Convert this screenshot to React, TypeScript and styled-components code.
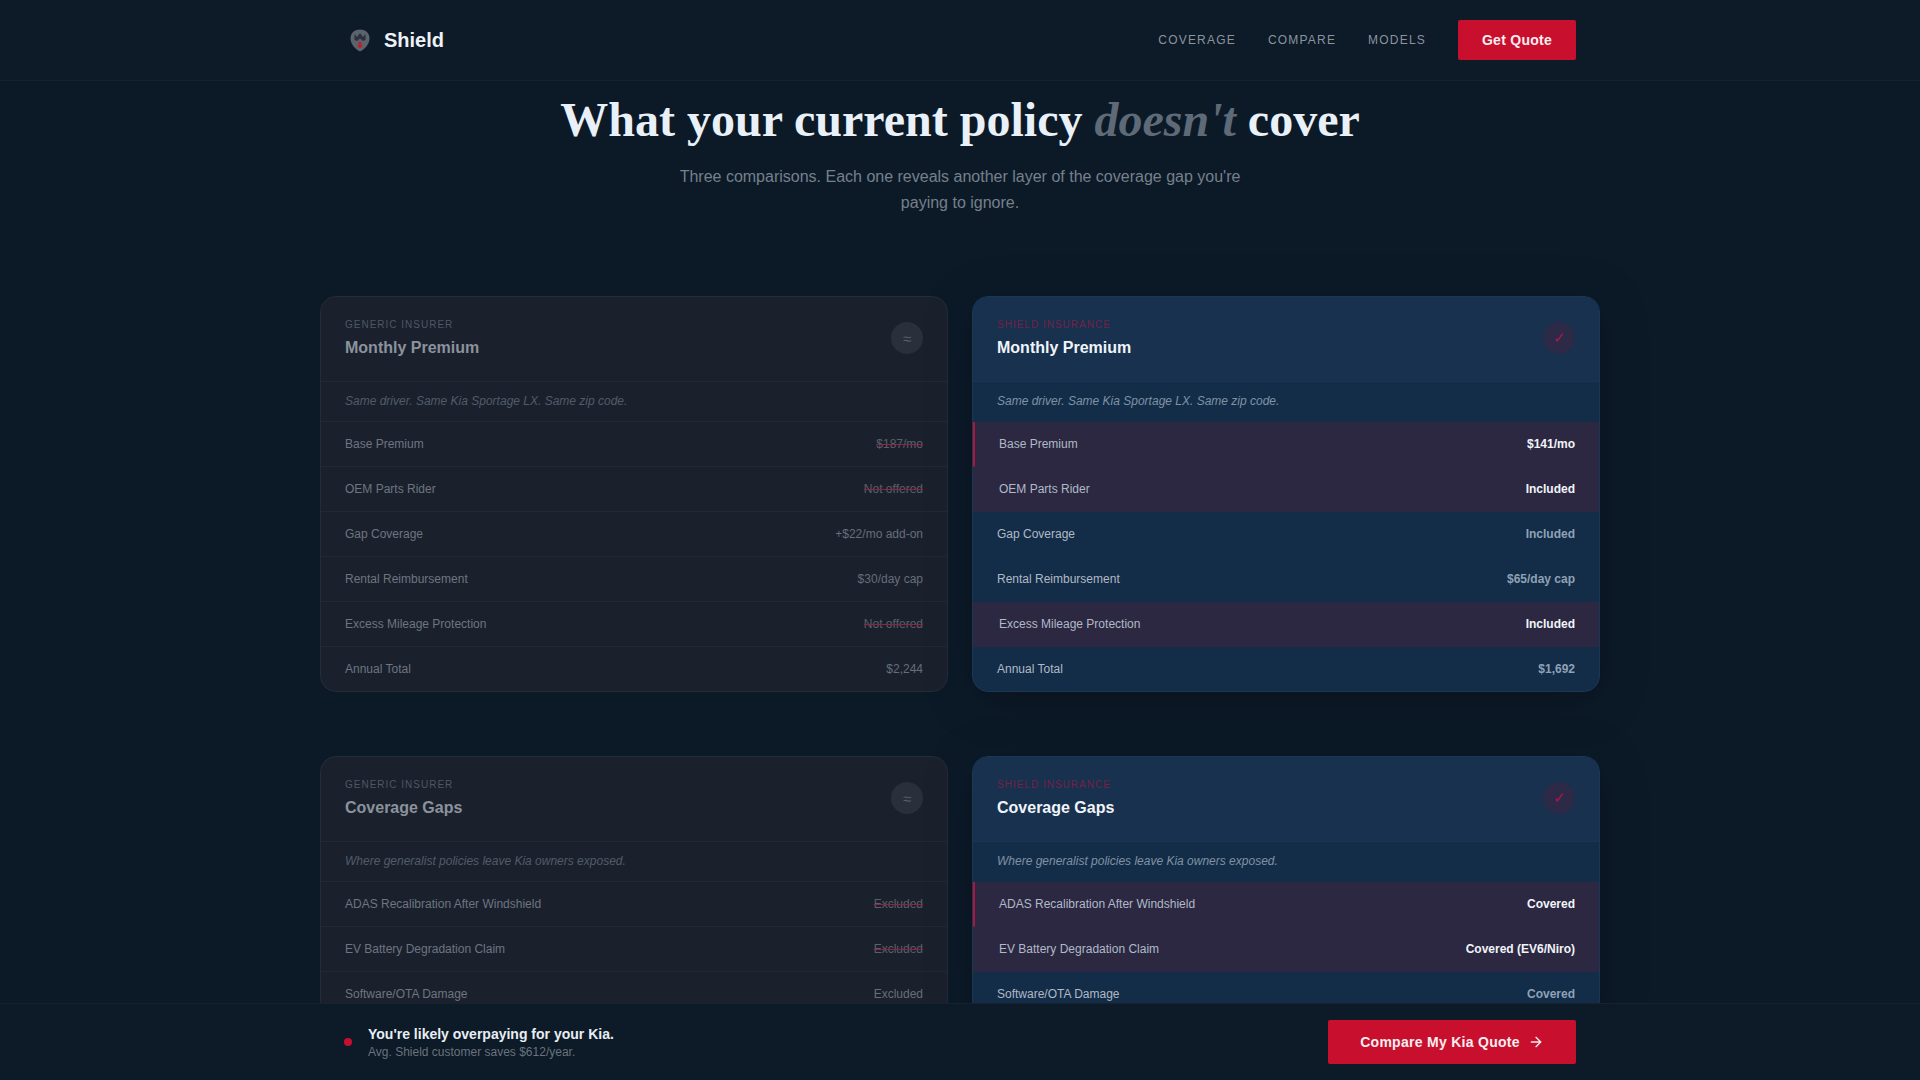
import React from "react";
import styled, { createGlobalStyle } from "styled-components";
import { ArrowRight } from "lucide-react";

const Global = createGlobalStyle`
  html, body { margin: 0; padding: 0; background: #0c1a28; }
  body { font-family: "Liberation Sans", Arial, sans-serif; color: #e8eef5; }
  * { box-sizing: border-box; }
`;

const Page = styled.div`
  min-height: 100vh;
  background: #0c1a28;
  padding-bottom: 40px;
`;
const Nav = styled.header`
  height: 81px;
  background: #0d1a27;
  border-bottom: 1px solid #16222f;
`;
const NavInner = styled.div`
  max-width: 1280px;
  height: 80px;
  margin: 0 auto;
  padding: 0 24px;
  display: flex;
  align-items: center;
  justify-content: space-between;
`;
const Brand = styled.div`
  display: flex;
  align-items: center;
  gap: 8px;
`;
const LogoBox = styled.span`
  width: 32px;
  height: 32px;
  display: flex;
  align-items: center;
  justify-content: center;
`;
const BrandName = styled.span`
  font-size: 20px;
  font-weight: 700;
  color: #eef2f6;
`;
const NavLinks = styled.nav`
  display: flex;
  align-items: center;
  gap: 32px;
`;
const NavLink = styled.a`
  font-size: 12px;
  letter-spacing: 1.2px;
  color: #8a949f;
  text-transform: uppercase;
`;
const QuoteButton = styled.button`
  width: 118px;
  height: 40px;
  border: 0;
  border-radius: 2px;
  background: #c8102e;
  color: #f8eef0;
  font: 700 14px "Liberation Sans", Arial, sans-serif;
  letter-spacing: 0.28px;
`;
const Hero = styled.section`
  padding-top: 10px;
  text-align: center;
`;
const Title = styled.h1`
  margin: 0;
  font: 700 48px/1.2 "Liberation Serif", "Times New Roman", serif;
  color: #e9f0f7;
`;
const Faded = styled.em`
  color: #5e6a77;
`;
const Sub = styled.p`
  width: 576px;
  margin: 15px auto 0;
  font-size: 16px;
  line-height: 26px;
  color: #76808c;
`;
const Main = styled.main`
  max-width: 1280px;
  margin: 80px auto 0;
  display: flex;
  flex-direction: column;
  gap: 64px;
`;
const Pair = styled.div`
  display: grid;
  grid-template-columns: 1fr 1fr;
  gap: 24px;
`;
const Card = styled.article<{ $shield?: boolean }>`
  border-radius: 16px;
  overflow: hidden;
  border: 1px solid ${(p) => (p.$shield ? "#1a3754" : "#232c39")};
  background: ${(p) => (p.$shield ? "#132c47" : "#1a212d")};
  box-shadow: ${(p) => (p.$shield ? "0 8px 48px rgba(0,0,0,.28)" : "none")};
`;
const CardHead = styled.div<{ $shield?: boolean }>`
  height: 85px;
  padding: 0 24px 1px;
  display: flex;
  align-items: center;
  justify-content: space-between;
  background: ${(p) => (p.$shield ? "#17314f" : "transparent")};
  border-bottom: 1px solid ${(p) => (p.$shield ? "#1a3550" : "#212936")};
`;
const Kicker = styled.div<{ $shield?: boolean }>`
  font-size: 10px;
  line-height: 12px;
  letter-spacing: 1px;
  text-transform: uppercase;
  color: ${(p) => (p.$shield ? "#742247" : "#4f5764")};
`;
const CardTitle = styled.h3<{ $shield?: boolean }>`
  margin: 7px 0 0;
  font-size: 16px;
  line-height: 20px;
  font-weight: 700;
  color: ${(p) => (p.$shield ? "#f0f4f8" : "#8b929c")};
`;
const Badge = styled.span<{ $shield?: boolean }>`
  width: 32px;
  height: 32px;
  border-radius: 50%;
  display: flex;
  align-items: center;
  justify-content: center;
  font-size: 15px;
  color: ${(p) => (p.$shield ? "#b01545" : "#565d69")};
  background: ${(p) => (p.$shield ? "#2c2a47" : "#2a303b")};
`;
const Note = styled.div<{ $shield?: boolean }>`
  height: 40px;
  padding: 0 24px;
  display: flex;
  align-items: center;
  font-size: 12px;
  font-style: italic;
  color: ${(p) => (p.$shield ? "#7f92a6" : "#535b68")};
  border-bottom: 1px solid ${(p) => (p.$shield ? "transparent" : "#212936")};
`;
const Row = styled.div<{ $shield?: boolean; $hit?: boolean; $mark?: boolean }>`
  height: 45px;
  padding: 0 24px;
  display: flex;
  align-items: center;
  justify-content: space-between;
  font-size: 12px;
  background: ${(p) => (p.$hit ? "#2c2842" : "transparent")};
  border-left: ${(p) =>
    p.$hit ? `2px solid ${p.$mark ? "#b01540" : "transparent"}` : "0"};
  border-bottom: 1px solid ${(p) => (p.$shield ? "transparent" : "#212936")};
  &:last-child { height: 44px; border-bottom: 0; }
`;
const RowLabel = styled.span<{ $shield?: boolean }>`
  color: ${(p) => (p.$shield ? "#b0bac6" : "#6e7580")};
`;
const RowValue = styled.span<{ $shield?: boolean; $hit?: boolean; $struck?: boolean }>`
  color: ${(p) =>
    p.$hit ? "#f1f4f8" : p.$shield ? "#8ea2b6" : p.$struck ? "#5a5f6b" : "#666e79"};
  font-weight: ${(p) => (p.$shield ? 700 : 400)};
  text-decoration: ${(p) => (p.$struck ? "line-through" : "none")};
  text-decoration-color: #8e2440;
`;
const Bar = styled.aside`
  position: fixed;
  left: 0;
  right: 0;
  bottom: 0;
  height: 77px;
  background: #0d1a27;
  border-top: 1px solid #16222f;
`;
const BarInner = styled.div`
  max-width: 1280px;
  height: 100%;
  margin: 0 auto;
  padding: 0 24px;
  display: flex;
  align-items: center;
  justify-content: space-between;
`;
const BarLeft = styled.div`
  display: flex;
  align-items: center;
  gap: 16px;
`;
const Dot = styled.span`
  width: 8px;
  height: 8px;
  border-radius: 50%;
  background: #c8102e;
`;
const BarTitle = styled.div`
  font-size: 14px;
  line-height: 18px;
  font-weight: 700;
  color: #e9eef4;
`;
const BarSub = styled.div`
  font-size: 12px;
  line-height: 16px;
  margin-top: 1px;
  color: #69737f;
`;
const CompareButton = styled.button`
  width: 248px;
  height: 44px;
  border: 0;
  border-radius: 2px;
  background: #c8102e;
  color: #f8eef0;
  display: flex;
  align-items: center;
  justify-content: center;
  gap: 8px;
  font: 700 14px "Liberation Sans", Arial, sans-serif;
  letter-spacing: 0.28px;
`;

type Item = { label: string; generic: string; shield: string; struck?: boolean; hit?: boolean };
type Block = { title: string; note: string; items: Item[] };

const blocks: Block[] = [
  {
    title: "Monthly Premium",
    note: "Same driver. Same Kia Sportage LX. Same zip code.",
    items: [
      { label: "Base Premium", generic: "$187/mo", shield: "$141/mo", struck: true, hit: true },
      { label: "OEM Parts Rider", generic: "Not offered", shield: "Included", struck: true, hit: true },
      { label: "Gap Coverage", generic: "+$22/mo add-on", shield: "Included" },
      { label: "Rental Reimbursement", generic: "$30/day cap", shield: "$65/day cap" },
      { label: "Excess Mileage Protection", generic: "Not offered", shield: "Included", struck: true, hit: true },
      { label: "Annual Total", generic: "$2,244", shield: "$1,692" },
    ],
  },
  {
    title: "Coverage Gaps",
    note: "Where generalist policies leave Kia owners exposed.",
    items: [
      { label: "ADAS Recalibration After Windshield", generic: "Excluded", shield: "Covered", struck: true, hit: true },
      { label: "EV Battery Degradation Claim", generic: "Excluded", shield: "Covered (EV6/Niro)", struck: true, hit: true },
      { label: "Software/OTA Damage", generic: "Excluded", shield: "Covered" },
    ],
  },
];

function Logo() {
  return (
    <svg width="20" height="23" viewBox="0 0 20 23" aria-hidden="true">
      <path d="M10 0.5 C15 0.5 19.5 3.5 19.5 9.5 C19.5 15 15 20 10 22.5 C5 20 0.5 15 0.5 9.5 C0.5 3.5 5 0.5 10 0.5 Z" fill="#5b636d" />
      <path d="M4.5 5 L7 8 L10 4 L13 8 L15.5 5 L15.5 11 L13 12 L10 9.5 L7 12 L4.5 11 Z" fill="#2a323e" />
      <path d="M10 12 C11.8 14 12.6 16 12 17.8 C11.2 19.5 8.8 19.5 8 17.8 C7.4 16 8.2 14 10 12 Z" fill="#b3262f" />
    </svg>
  );
}

function PolicyCard({ block, shield }: { block: Block; shield?: boolean }) {
  return (
    <Card $shield={shield}>
      <CardHead $shield={shield}>
        <div>
          <Kicker $shield={shield}>{shield ? "Shield Insurance" : "Generic Insurer"}</Kicker>
          <CardTitle $shield={shield}>{block.title}</CardTitle>
        </div>
        <Badge $shield={shield}>{shield ? "✓" : "≈"}</Badge>
      </CardHead>
      <Note $shield={shield}>{block.note}</Note>
      {block.items.map((item, i) => (
        <Row key={item.label} $shield={shield} $hit={shield && item.hit} $mark={i === 0}>
          <RowLabel $shield={shield}>{item.label}</RowLabel>
          <RowValue $shield={shield} $hit={shield && item.hit} $struck={!shield && item.struck}>
            {shield ? item.shield : item.generic}
          </RowValue>
        </Row>
      ))}
    </Card>
  );
}

export default function App() {
  return (
    <Page>
      <Global />
      <Nav>
        <NavInner>
          <Brand>
            <LogoBox><Logo /></LogoBox>
            <BrandName>Shield</BrandName>
          </Brand>
          <NavLinks>
            <NavLink>Coverage</NavLink>
            <NavLink>Compare</NavLink>
            <NavLink>Models</NavLink>
            <QuoteButton>Get Quote</QuoteButton>
          </NavLinks>
        </NavInner>
      </Nav>
      <Hero>
        <Title>What your current policy <Faded>doesn't</Faded> cover</Title>
        <Sub>Three comparisons. Each one reveals another layer of the coverage gap you're paying to ignore.</Sub>
      </Hero>
      <Main>
        {blocks.map((b) => (
          <Pair key={b.title}>
            <PolicyCard block={b} />
            <PolicyCard block={b} shield />
          </Pair>
        ))}
      </Main>
      <Bar>
        <BarInner>
          <BarLeft>
            <Dot />
            <div>
              <BarTitle>You're likely overpaying for your Kia.</BarTitle>
              <BarSub>Avg. Shield customer saves $612/year.</BarSub>
            </div>
          </BarLeft>
          <CompareButton>
            Compare My Kia Quote
            <ArrowRight size={16} strokeWidth={2} />
          </CompareButton>
        </BarInner>
      </Bar>
    </Page>
  );
}
